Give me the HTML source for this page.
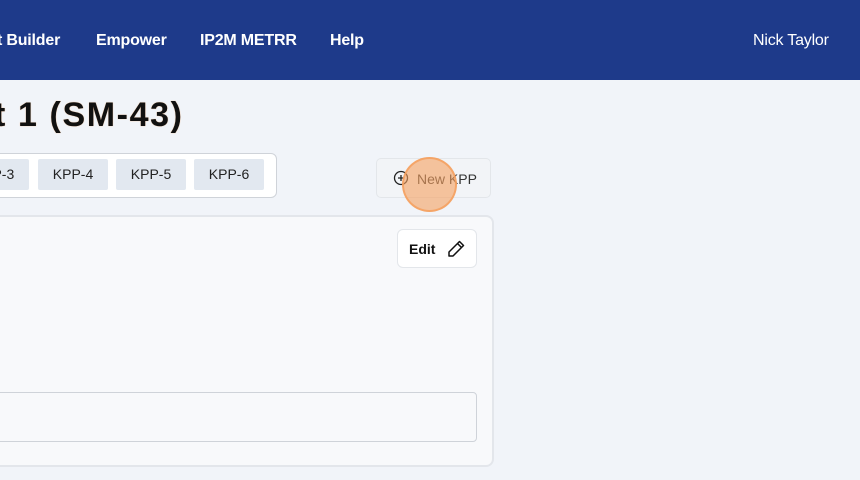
<!DOCTYPE html>
<html><head><style>
*{margin:0;padding:0;box-sizing:border-box}
body{width:860px;height:480px;overflow:hidden;background:#f1f4f9;font-family:"Liberation Sans",sans-serif;position:relative}
.nav{position:absolute;left:0;top:0;width:860px;height:80px;background:#1e3a8a;color:#fff;font-size:16px;font-weight:bold}
.nav span{position:absolute;top:32px;letter-spacing:-0.2px}
.title{position:absolute;left:-6px;top:96px;font-size:34px;font-weight:bold;color:#111;letter-spacing:1.6px;text-shadow:0 0 1px #f6b27a}
.tabs{position:absolute;left:-10px;top:153px;width:287px;height:45px;background:#fff;border:1px solid #cfd3d9;border-radius:6px}
.tab{position:absolute;top:159px;height:31px;width:70px;background:#e2e8f0;border-radius:2px;font-size:14px;color:#222;text-align:center;line-height:31px}
.newk{position:absolute;left:376px;top:158px;width:115px;height:40px;border:1px solid #e3e6ea;border-radius:5px;background:#f2f4f7;font-size:14px;color:#333}
.card{position:absolute;left:-10px;top:215px;width:504px;height:252px;background:#f8f9fb;border:2px solid #e3e6eb;border-radius:8px}
.edit{position:absolute;left:397px;top:229px;width:80px;height:39px;background:#fff;border:1px solid #e3e6ea;border-radius:6px;font-size:14px;font-weight:bold;color:#111}
.inp{position:absolute;left:-10px;top:392px;width:487px;height:50px;border:1px solid #cfd3d9;border-radius:4px;background:#f8f9fb}
.dot{position:absolute;left:402px;top:157px;width:55px;height:55px;border-radius:50%;background:rgba(245,160,95,0.6);border:2px solid rgba(245,160,95,0.85)}
</style></head><body>
<div class="nav">
<span style="left:-3px">t Builder</span>
<span style="left:96px">Empower</span>
<span style="left:200px">IP2M METRR</span>
<span style="left:330px">Help</span>
<span style="left:753px;font-weight:normal">Nick Taylor</span>
</div>
<div class="title">t 1 (SM-43)</div>
<div class="tabs"></div>
<div class="tab" style="left:-41px">KPP-3</div>
<div class="tab" style="left:38px">KPP-4</div>
<div class="tab" style="left:116px">KPP-5</div>
<div class="tab" style="left:194px">KPP-6</div>
<div class="newk">
<svg style="position:absolute;left:16px;top:11px" width="16" height="16" viewBox="0 0 16 16"><circle cx="8" cy="8" r="6.5" fill="none" stroke="#222" stroke-width="1.3"/><path d="M8 5v6M5 8h6" stroke="#222" stroke-width="1.3"/></svg>
<span style="position:absolute;left:40px;top:12px">New KPP</span>
</div>
<div class="card"></div>
<div class="edit"><span style="position:absolute;left:11px;top:11px">Edit</span>
<svg style="position:absolute;left:48px;top:9px" width="20" height="20" viewBox="0 0 20 20"><path d="M13.5 2.5l4 4L7 17H3v-4z M11.5 4.5l4 4" fill="none" stroke="#111" stroke-width="1.5" stroke-linejoin="round"/></svg>
</div>
<div class="inp"></div>
<div class="dot"></div>
</body></html>
